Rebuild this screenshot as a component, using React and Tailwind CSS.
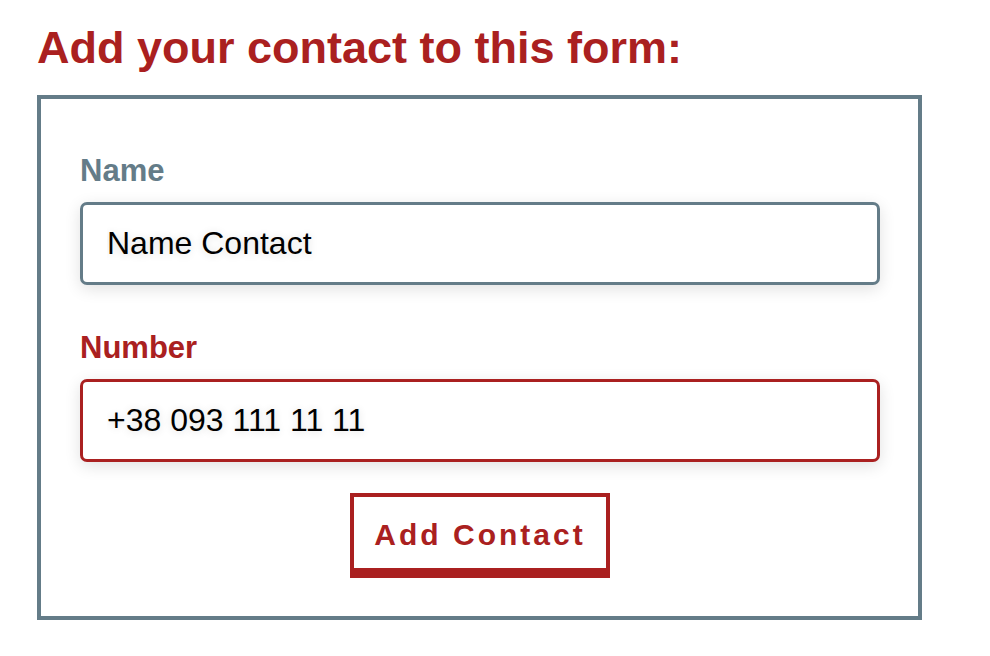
export default function App() {
  return (
    <div className="min-h-[656px] bg-white pl-[37px] pt-[22px] font-['Liberation_Sans',Arial,sans-serif]">
      <h1 className="text-[45px] leading-[52px] font-bold text-[#aa2020]">Add your contact to this form:</h1>

      <form className="mt-[21px] w-[885px] border-4 border-[#647c88] pl-[39px] pr-[38px] pt-[55px] pb-[38px]" onSubmit={e => e.preventDefault()}>
        <label className="block">
          <span className="block text-[31px] leading-[34px] font-bold text-[#647c88]">Name</span>
          <input
            readOnly
            value="Name Contact"
            className="mt-[14px] block w-[800px] h-[83px] rounded-[7px] border-[3px] border-[#647c88] bg-white pl-6 pt-0 pb-[1px] text-[32px] text-black outline-none shadow-[0_4px_16px_rgba(0,0,0,0.12)] [text-shadow:0_1px_8px_rgba(0,0,0,0.14)]"
          />
        </label>

        <label className="block mt-[46px]">
          <span className="block text-[31px] leading-[34px] font-bold text-[#aa2020]">Number</span>
          <input
            readOnly
            value="+38 093 111 11 11"
            className="mt-[14px] block w-[800px] h-[83px] rounded-[7px] border-[3px] border-[#aa2020] bg-white pl-6 pt-0 pb-[1px] text-[32px] text-black outline-none shadow-[0_4px_16px_rgba(0,0,0,0.12)] [text-shadow:0_1px_8px_rgba(0,0,0,0.14)]"
          />
        </label>

        <div className="mt-[31px] flex justify-center">
          <button
            type="submit"
            className="w-[260px] border-4 border-b-[10px] border-[#aa2020] bg-white pt-[21px] pb-[16px] text-[30px] leading-[34px] font-bold tracking-[3px] text-[#aa2020]"
          >
            Add Contact
          </button>
        </div>
      </form>
    </div>
  );
}
